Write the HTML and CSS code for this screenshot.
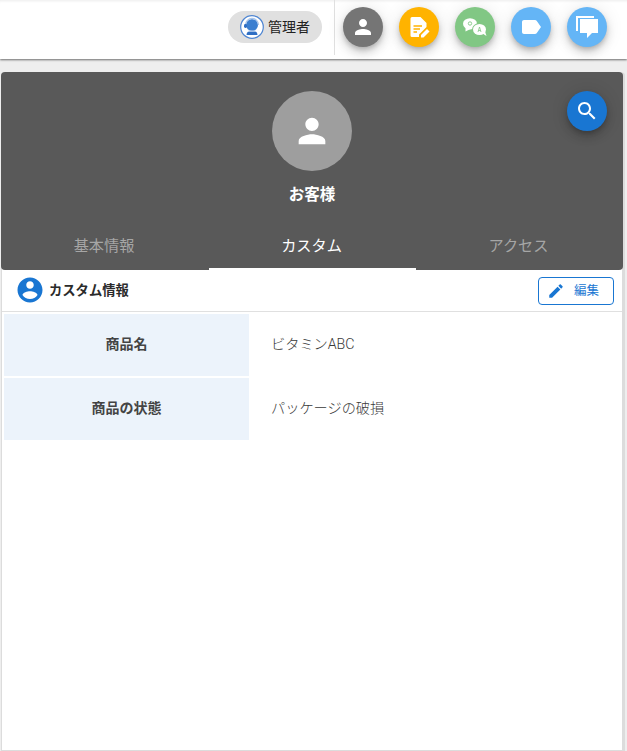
FILE: index.html
```html
<!DOCTYPE html>
<html lang="ja">
<head>
<meta charset="utf-8">
<title>カスタム情報</title>
<link rel="stylesheet" href="styles.css">
</head>
<body>
<header class="topbar">
  <div class="chip">
    <svg class="chip-icon" viewBox="0 0 24 24" aria-hidden="true">
      <circle cx="12" cy="12" r="11.300" fill="#fff" stroke="#4f86d2" stroke-width="1.200"/>
      <circle cx="12" cy="10" r="6" fill="#3b7fd0"/>
      <path d="M5.500 10a6.500 6.500 0 0 1 13 0" fill="none" stroke="#a9c6ec" stroke-width="1.300"/>
      <path d="M6.500 20c0-3 2-4.500 5.500-4.500s5.500 1.500 5.500 4.500z" fill="#2f6fc4"/>
      <rect x="4" y="9" width="3" height="4" rx="1.400" fill="#2f6fc4"/>
      <rect x="8" y="15.500" width="8" height="1.200" fill="#cfe0f5"/>
    </svg>
    <span>管理者</span>
  </div>
  <div class="actions">
    <button class="fab fab-gray" aria-label="ユーザー">
      <svg viewBox="0 0 24 24"><path d="M12 12c2.210 0 4-1.790 4-4s-1.790-4-4-4-4 1.790-4 4 1.790 4 4 4zm0 2c-2.670 0-8 1.340-8 4v2h16v-2c0-2.660-5.330-4-8-4z"/></svg>
    </button>
    <button class="fab fab-amber" aria-label="メモ">
      <svg viewBox="0 0 24 24"><path d="M5 2h8.500l6 6v4L12 19.500V22H5a1.500 1.500 0 0 1-1.500-1.500v-17A1.500 1.500 0 0 1 5 2z"/><path class="cut" d="M6.500 11h8.500M6.500 14h6.500M6.500 17h3.500" fill="none" stroke-width="1.500"/><path d="M14 22.500V20l6-6 2.500 2.500-6 6z"/></svg>
    </button>
    <button class="fab fab-green" aria-label="Q&amp;A">
      <svg viewBox="0 0 24 24"><ellipse cx="7" cy="8.800" rx="7" ry="5.600"/><path d="M2.500 12.500 2.500 16.500l5-2.500z"/><ellipse class="bite" cx="16.500" cy="14.500" rx="7.500" ry="6.500"/><ellipse cx="16.500" cy="14.500" rx="6.500" ry="5.500"/><path d="M19.500 18.500l4 2.500-1.500-4.500z"/><circle class="cut-ring" cx="7" cy="8.500" r="1.700"/><path class="cut" d="M15 17l1.500-5 1.500 5M15.500 15.500h2" fill="none" stroke-width=".8"/></svg>
    </button>
    <button class="fab fab-blue" aria-label="ラベル">
      <svg viewBox="0 0 24 24"><path d="M17.630 5.840C17.270 5.330 16.670 5 16 5L5 5.010C3.900 5.010 3 5.900 3 7v10c0 1.100.9 1.990 2 1.990L16 19c.67 0 1.270-.33 1.630-.84L22 12l-4.370-6.160z"/></svg>
    </button>
    <button class="fab fab-blue" aria-label="コメント">
      <svg viewBox="0 0 24 24"><path d="M1 1h18v2H3v13H1z"/><path d="M5 4h18v14h-6l-5 5v-5H5z"/></svg>
    </button>
  </div>
</header>

<main class="panel">
  <section class="hero">
    <div class="avatar">
      <svg viewBox="0 0 24 24"><path d="M12 12c2.210 0 4-1.790 4-4s-1.790-4-4-4-4 1.790-4 4 1.790 4 4 4zm0 2c-2.670 0-8 1.340-8 4v2h16v-2c0-2.660-5.330-4-8-4z"/></svg>
    </div>
    <h1 class="name">お客様</h1>
    <button class="search" aria-label="検索">
      <svg viewBox="0 0 24 24"><path d="M15.500 14h-.79l-.28-.27C15.410 12.590 16 11.110 16 9.500 16 5.910 13.090 3 9.500 3S3 5.910 3 9.500 5.910 16 9.500 16c1.610 0 3.090-.59 4.230-1.570l.27.28v.79l5 4.990L20.490 19l-4.990-5zm-6 0C7.010 14 5 11.990 5 9.500S7.010 5 9.500 5 14 7.010 14 9.500 11.990 14 9.500 14z"/></svg>
    </button>
    <nav class="tabs">
      <a class="tab">基本情報</a>
      <a class="tab tab-active">カスタム</a>
      <a class="tab">アクセス</a>
    </nav>
  </section>

  <div class="section-head">
    <div class="section-title">
      <svg viewBox="0 0 24 24"><path d="M12 2C6.480 2 2 6.480 2 12s4.480 10 10 10 10-4.480 10-10S17.520 2 12 2zm0 3c1.660 0 3 1.340 3 3s-1.340 3-3 3-3-1.340-3-3 1.340-3 3-3zm0 14.200c-2.500 0-4.710-1.280-6-3.220.03-1.990 4-3.080 6-3.080 1.990 0 5.970 1.090 6 3.080-1.290 1.940-3.500 3.220-6 3.220z"/></svg>
      <span>カスタム情報</span>
    </div>
    <button class="edit">
      <svg viewBox="0 0 24 24"><path d="M3 17.250V21h3.750L17.810 9.940l-3.750-3.750L3 17.250zM20.710 7.040c.39-.39.39-1.020 0-1.410l-2.340-2.340c-.39-.39-1.020-.39-1.410 0l-1.830 1.830 3.750 3.750 1.830-1.830z"/></svg>
      <span>編集</span>
    </button>
  </div>

  <dl class="info">
    <div class="row"><dt>商品名</dt><dd>ビタミンABC</dd></div>
    <div class="row"><dt>商品の状態</dt><dd>パッケージの破損</dd></div>
  </dl>
</main>
</body>
</html>
```
FILE: styles.css
```css
* { box-sizing: border-box; }

html, body { height: 100%; }

body {
  margin: 0;
  height: 751px;
  overflow: hidden;
  background: #eeeeee;
  font-family: Roboto, "Noto Sans CJK JP", sans-serif;
  color: #333;
}

button { font-family: inherit; border: 0; padding: 0; cursor: pointer; }

.topbar {
  height: 59px;
  background: #fff;
  display: flex;
  justify-content: flex-end;
  align-items: flex-start;
  padding-right: 20px;
  box-shadow: 0 1px 2px rgba(0,0,0,.55), inset 0 3px 3px -2px rgba(0,0,0,.08);
}

.chip {
  margin-top: 11px;
  width: 94px;
  height: 32px;
  border-radius: 16px;
  background: #e0e0e0;
  display: flex;
  align-items: center;
  padding-left: 12px;
  gap: 4px;
  font-size: 14px;
  color: #222;
}

.chip-icon { width: 24px; height: 24px; flex: none; }

.chip span { margin-top: -3px; }

.actions {
  margin-left: 12px;
  height: 55px;
  border-left: 1px solid #e0e0e0;
  padding: 7px 0 0 8px;
  display: flex;
  gap: 16px;
}

.fab {
  width: 40px;
  height: 40px;
  border-radius: 50%;
  display: flex;
  align-items: center;
  justify-content: center;
  box-shadow: 0 3px 5px -1px rgba(0,0,0,.2), 0 6px 10px 0 rgba(0,0,0,.14), 0 1px 18px 0 rgba(0,0,0,.1);
}

.fab svg { width: 24px; height: 24px; fill: #fff; }

.fab-gray { background: #757575; }
.fab-amber { background: #ffb300; }
.fab-green { background: #81c784; }
.fab-blue { background: #64b5f6; }

.fab-amber .cut { stroke: #ffb300; }
.fab-green .cut { stroke: #81c784; }
.fab-green .bite { fill: #81c784; }
.fab-green .cut-ring { fill: none; stroke: #81c784; stroke-width: .9; }

.panel {
  margin: 13px 2px 0 1px;
  height: 679px;
  background: #fff;
  border: solid #dcdcdc;
  border-width: 0 3px 1px 1px;
  border-radius: 4px 4px 0 0;
}

.hero {
  position: relative;
  margin: 0 -1px;
  height: 198px;
  background: #595959;
  border-radius: 4px;
  display: flex;
  flex-direction: column;
  align-items: center;
  padding-top: 19px;
}

.avatar {
  width: 80px;
  height: 80px;
  border-radius: 50%;
  background: #9e9e9e;
  display: flex;
  align-items: center;
  justify-content: center;
}

.avatar svg { width: 40px; height: 40px; fill: #fff; }

.name {
  margin: 14px 0 0;
  font-size: 15.500px;
  line-height: 20px;
  font-weight: 700;
  color: #fff;
}

.search {
  position: absolute;
  top: 19px;
  right: 16px;
  width: 40px;
  height: 40px;
  border-radius: 50%;
  background: #1976d2;
  display: flex;
  align-items: center;
  justify-content: center;
  box-shadow: 0 3px 5px -1px rgba(0,0,0,.2), 0 6px 10px 0 rgba(0,0,0,.14), 0 1px 18px 0 rgba(0,0,0,.12);
}

.search svg { width: 24px; height: 24px; fill: #fff; }

.tabs {
  margin-top: auto;
  width: 100%;
  display: grid;
  grid-template-columns: 208px 207px 1fr;
  height: 48px;
}

.tab {
  display: flex;
  align-items: center;
  justify-content: center;
  padding: 0 2px 4px 0;
  font-size: 15.200px;
  color: rgba(255,255,255,.47);
}

.tab-active {
  color: #fff;
  border-bottom: 2px solid #fff;
  padding-bottom: 2px;
}

.section-head {
  height: 42px;
  border-bottom: 1px solid #e0e0e0;
  display: flex;
  align-items: center;
  justify-content: space-between;
  padding: 0 8px 0 13px;
}

.section-title {
  display: flex;
  align-items: center;
  gap: 4px;
  font-size: 13.300px;
  font-weight: 700;
  color: #2b2b2b;
}

.section-title span { margin-top: -2px; }

.section-title svg { width: 30px; height: 30px; fill: #1976d2; margin-top: -1px; }

.edit {
  width: 76px;
  height: 28px;
  background: #fff;
  border: 1px solid #1976d2;
  border-radius: 4px;
  display: flex;
  align-items: center;
  gap: 9px;
  padding-left: 8px;
  font-size: 12.500px;
  color: #1976d2;
}

.edit svg { width: 18px; height: 18px; fill: #1976d2; }

.edit span { margin-top: -2px; }

.info { margin: 2px 0 0; padding: 0 0 0 2px; }

.row {
  display: flex;
  height: 64px;
}

dt {
  width: 245px;
  height: 62px;
  background: #ecf3fb;
  display: flex;
  align-items: center;
  justify-content: center;
  padding-bottom: 4px;
  font-size: 14px;
  font-weight: 700;
  color: #444;
}

dd {
  margin: 0;
  padding: 0 0 4px 22px;
  height: 62px;
  display: flex;
  align-items: center;
  font-size: 14.200px;
  font-weight: 300;
  color: #3a3a3a;
}
```
